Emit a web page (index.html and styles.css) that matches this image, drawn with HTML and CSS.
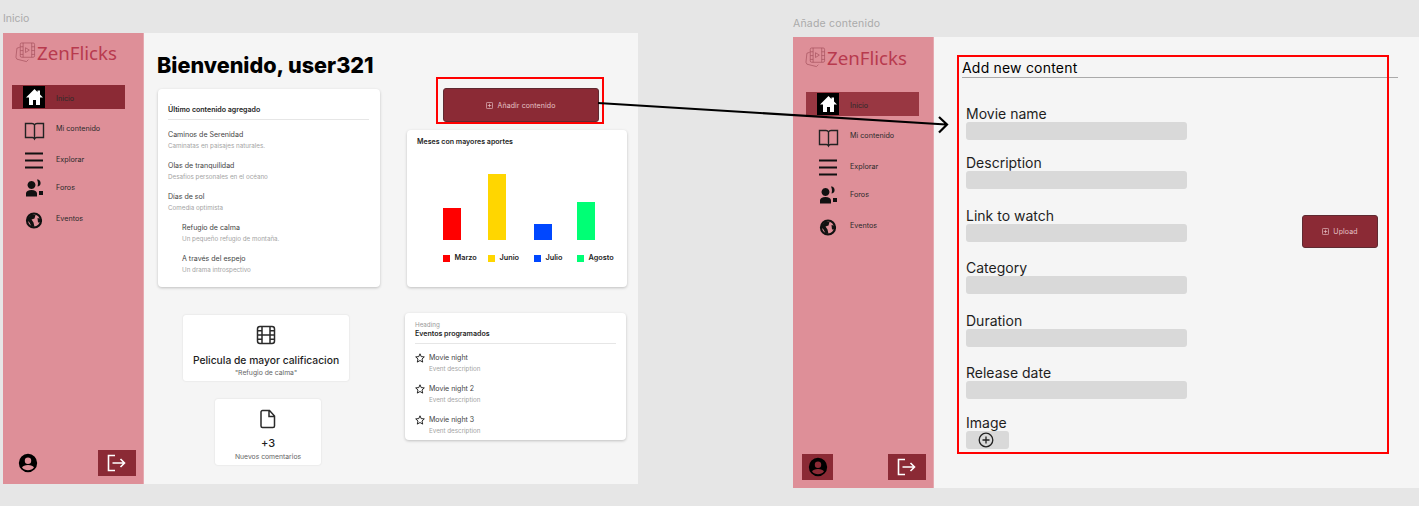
FILE: index.html
```html
<!DOCTYPE html>
<html lang="es">
<head>
<meta charset="utf-8">
<title>ZenFlicks</title>
<link rel="stylesheet" href="styles.css">
</head>
<body>
<div class="canvas">
  <div class="frame-label label-home">Inicio</div>
  <section class="frame frame-home">
    <aside class="sidebar">
      <div class="logo">
        <svg class="logo-icon" viewBox="0 0 22 22"><path d="M5 5.500 2 6.500 1 16l1 2 10 2.500 2-2"/><rect x="5.500" y="1" width="15" height="15" rx="1.500"/><path d="M8.500 1v15M17.500 1v15M5.500 5h3M5.500 9h3M5.500 13h3M17.500 5h3M17.500 9h3M17.500 13h3M11 6l4 2.500-4 2.500z"/></svg>
        <span>ZenFlicks</span>
      </div>
      <nav class="nav">
        <a class="nav-item active"><span class="nav-icon home-box"><svg viewBox="0 0 22 22" class="icon-22"><path fill="#fff" d="M11.500 3 3 11.500h3V19h4v-5h3v5h4v-7.500h3L17 8.500V4.500h-2.500v1.500z"/></svg></span><span class="nav-text">Inicio</span></a>
        <a class="nav-item"><span class="nav-icon"><svg viewBox="0 0 22 22" class="icon-22"><path fill="none" stroke="#222" stroke-width="1.400" d="M2.500 6.500H9c1 0 2 .5 2.500 1.500.5-1 1.500-1.500 2.500-1.500h6.500v14h-7c-1 0-1.500.5-2 1.500-.5-1-1-1.500-2-1.500h-7zM11.500 8v14"/></svg></span><span class="nav-text">Mi contenido</span></a>
        <a class="nav-item"><span class="nav-icon"><svg viewBox="0 0 22 22" class="icon-22"><path stroke="#111" stroke-width="2.200" d="M2 5.500h18M2 12.500h18M2 19.500h18"/></svg></span><span class="nav-text">Explorar</span></a>
        <a class="nav-item"><span class="nav-icon"><svg viewBox="0 0 22 22" class="icon-22"><path fill="#111" d="M8.500 5a4 4 0 1 1-.01 0zM14 3.500c2.500 0 4 2 3.500 4.500-.3 1.500-1.500 2.500-3 2.500.8-2 .6-5-.5-7zM3 20.500v-3c0-2 2.200-3.500 5.500-3.500s5.500 1.500 5.500 3.500v3zM16 15h4v4h-4z"/></svg></span><span class="nav-text">Foros</span></a>
        <a class="nav-item"><span class="nav-icon"><svg viewBox="0 0 22 22" class="icon-22"><circle cx="11" cy="13.500" r="7" fill="none" stroke="#111" stroke-width="2.200"/><path fill="#111" d="M5 11l3.500-4 4 1-1 3.500-3 1 2 3 1 4.500-3-.5-2-4-2-2zM14.500 11l4 1 .5 3-4 .5z"/></svg></span><span class="nav-text">Eventos</span></a>
      </nav>
      <div class="side-footer">
        <span class="avatar-btn"><svg viewBox="0 0 24 24" class="icon-avatar"><path fill="#000" d="M12 2a10 10 0 1 0 0 20 10 10 0 0 0 0-20zm0 4a3.500 3.500 0 1 1 0 7 3.500 3.500 0 0 1 0-7zm0 14c-2.700 0-5-1.200-6.500-3 .6-1.700 3.300-2.700 6.500-2.700s5.900 1 6.500 2.700c-1.500 1.800-3.800 3-6.500 3z"/></svg></span>
        <span class="logout-btn"><svg viewBox="0 0 20 18" class="icon-logout"><path fill="none" stroke="#fff" stroke-width="1.600" d="M8 1.500H1.500v15H8M5.500 9h12M13.500 5l4 4-4 4"/></svg></span>
      </div>
    </aside>
    <main class="home-main">
      <h1 class="welcome">Bienvenido, user321</h1>
      <div class="home-columns">
        <div class="col-left">
          <div class="card latest">
            <div class="card-title ruled">Último contenido agregado</div>
            <div class="list">
              <div class="entry"><div class="entry-title">Caminos de Serenidad</div><div class="entry-sub">Caminatas en paisajes naturales.</div></div>
              <div class="entry"><div class="entry-title">Olas de tranquilidad</div><div class="entry-sub">Desafíos personales en el océano</div></div>
              <div class="entry"><div class="entry-title">Días de sol</div><div class="entry-sub">Comedia optimista</div></div>
              <div class="entry indented"><div class="entry-title">Refugio de calma</div><div class="entry-sub">Un pequeño refugio de montaña.</div></div>
              <div class="entry indented"><div class="entry-title">A través del espejo</div><div class="entry-sub">Un drama introspectivo</div></div>
            </div>
          </div>
          <div class="card stat stat-movie">
            <svg viewBox="0 0 20 20" class="stat-icon"><rect x="1.500" y="1.500" width="17" height="17" rx="2.500"/><path d="M6 1.500v17M14 1.500v17M1.500 10h17M1.500 5.800H6M1.500 14.200H6M14 5.800h4.500M14 14.200h4.500"/></svg>
            <div class="stat-value">Pelicula de mayor calificacion</div>
            <div class="stat-caption">"Refugio de calma"</div>
          </div>
          <div class="card stat stat-comments">
            <svg viewBox="0 0 20 20" class="stat-icon"><path d="M4.500 1.500h7l5 5.500v10a1.500 1.500 0 0 1-1.500 1.500H4.500A1.500 1.500 0 0 1 3 17V3a1.500 1.500 0 0 1 1.500-1.500zM11 1.500v6h5.500"/></svg>
            <div class="stat-value">+3</div>
            <div class="stat-caption">Nuevos comentarios</div>
          </div>
        </div>
        <div class="col-right">
          <button class="action-btn add-btn"><svg viewBox="0 0 8 8" class="btn-icon"><rect x=".5" y=".5" width="7" height="7" rx="1"/><path d="M2 4h4M4 2v4"/></svg>Añadir contenido</button>
          <div class="card chart">
            <div class="card-title">Meses con mayores aportes</div>
            <div class="plot">
              <div class="bar-col"><div class="bar c-red" style="height:32px"></div></div>
              <div class="bar-col"><div class="bar c-yellow" style="height:66px"></div></div>
              <div class="bar-col"><div class="bar c-blue" style="height:16px"></div></div>
              <div class="bar-col"><div class="bar c-green" style="height:38px"></div></div>
            </div>
            <div class="legend">
              <div class="legend-item"><i class="swatch c-red"></i>Marzo</div>
              <div class="legend-item"><i class="swatch c-yellow"></i>Junio</div>
              <div class="legend-item"><i class="swatch c-blue"></i>Julio</div>
              <div class="legend-item"><i class="swatch c-green"></i>Agosto</div>
            </div>
          </div>
          <div class="card events">
            <div class="eyebrow">Heading</div>
            <div class="card-title ruled">Eventos programados</div>
            <div class="list">
              <div class="event"><svg viewBox="0 0 10 10" class="star"><path d="M5 .8 6.200 3.600 9.300 3.900 7 6 7.700 9.100 5 7.500 2.300 9.100 3 6 .7 3.900 3.800 3.600z"/></svg><div><div class="entry-title">Movie night</div><div class="entry-sub">Event description</div></div></div>
              <div class="event"><svg viewBox="0 0 10 10" class="star"><path d="M5 .8 6.200 3.600 9.300 3.900 7 6 7.700 9.100 5 7.500 2.300 9.100 3 6 .7 3.900 3.800 3.600z"/></svg><div><div class="entry-title">Movie night 2</div><div class="entry-sub">Event description</div></div></div>
              <div class="event"><svg viewBox="0 0 10 10" class="star"><path d="M5 .8 6.200 3.600 9.300 3.900 7 6 7.700 9.100 5 7.500 2.300 9.100 3 6 .7 3.900 3.800 3.600z"/></svg><div><div class="entry-title">Movie night 3</div><div class="entry-sub">Event description</div></div></div>
            </div>
          </div>
        </div>
      </div>
    </main>
  </section>

  <div class="frame-label label-add">Añade contenido</div>
  <section class="frame frame-add">
    <aside class="sidebar sidebar-alt">
      <div class="logo">
        <svg class="logo-icon" viewBox="0 0 22 22"><path d="M5 5.500 2 6.500 1 16l1 2 10 2.500 2-2"/><rect x="5.500" y="1" width="15" height="15" rx="1.500"/><path d="M8.500 1v15M17.500 1v15M5.500 5h3M5.500 9h3M5.500 13h3M17.500 5h3M17.500 9h3M17.500 13h3M11 6l4 2.500-4 2.500z"/></svg>
        <span>ZenFlicks</span>
      </div>
      <nav class="nav">
        <a class="nav-item active"><span class="nav-icon home-box"><svg viewBox="0 0 22 22" class="icon-22"><path fill="#fff" d="M11.500 3 3 11.500h3V19h4v-5h3v5h4v-7.500h3L17 8.500V4.500h-2.500v1.500z"/></svg></span><span class="nav-text">Inicio</span></a>
        <a class="nav-item"><span class="nav-icon"><svg viewBox="0 0 22 22" class="icon-22"><path fill="none" stroke="#222" stroke-width="1.400" d="M2.500 6.500H9c1 0 2 .5 2.500 1.500.5-1 1.500-1.500 2.500-1.500h6.500v14h-7c-1 0-1.500.5-2 1.500-.5-1-1-1.500-2-1.500h-7zM11.500 8v14"/></svg></span><span class="nav-text">Mi contenido</span></a>
        <a class="nav-item"><span class="nav-icon"><svg viewBox="0 0 22 22" class="icon-22"><path stroke="#111" stroke-width="2.200" d="M2 5.500h18M2 12.500h18M2 19.500h18"/></svg></span><span class="nav-text">Explorar</span></a>
        <a class="nav-item"><span class="nav-icon"><svg viewBox="0 0 22 22" class="icon-22"><path fill="#111" d="M8.500 5a4 4 0 1 1-.01 0zM14 3.500c2.500 0 4 2 3.500 4.500-.3 1.500-1.500 2.500-3 2.500.8-2 .6-5-.5-7zM3 20.500v-3c0-2 2.200-3.500 5.500-3.500s5.500 1.500 5.500 3.500v3zM16 15h4v4h-4z"/></svg></span><span class="nav-text">Foros</span></a>
        <a class="nav-item"><span class="nav-icon"><svg viewBox="0 0 22 22" class="icon-22"><circle cx="11" cy="13.500" r="7" fill="none" stroke="#111" stroke-width="2.200"/><path fill="#111" d="M5 11l3.500-4 4 1-1 3.500-3 1 2 3 1 4.500-3-.5-2-4-2-2zM14.500 11l4 1 .5 3-4 .5z"/></svg></span><span class="nav-text">Eventos</span></a>
      </nav>
      <div class="side-footer">
        <span class="avatar-btn"><svg viewBox="0 0 24 24" class="icon-avatar"><path fill="#000" d="M12 2a10 10 0 1 0 0 20 10 10 0 0 0 0-20zm0 4a3.500 3.500 0 1 1 0 7 3.500 3.500 0 0 1 0-7zm0 14c-2.700 0-5-1.200-6.500-3 .6-1.700 3.300-2.700 6.500-2.700s5.900 1 6.500 2.700c-1.500 1.800-3.800 3-6.500 3z"/></svg></span>
        <span class="logout-btn"><svg viewBox="0 0 20 18" class="icon-logout"><path fill="none" stroke="#fff" stroke-width="1.600" d="M8 1.500H1.500v15H8M5.500 9h12M13.500 5l4 4-4 4"/></svg></span>
      </div>
    </aside>
    <main class="add-main">
      <h2 class="form-title">Add new content</h2>
      <div class="form-body">
        <div class="fields">
          <div class="field"><div class="field-label">Movie name</div><div class="input"></div></div>
          <div class="field"><div class="field-label">Description</div><div class="input"></div></div>
          <div class="field"><div class="field-label">Link to watch</div><div class="input"></div></div>
          <div class="field"><div class="field-label">Category</div><div class="input"></div></div>
          <div class="field"><div class="field-label">Duration</div><div class="input"></div></div>
          <div class="field"><div class="field-label">Release date</div><div class="input"></div></div>
          <div class="field"><div class="field-label">Image</div><div class="image-btn"><svg viewBox="0 0 16 16" class="icon-plus"><circle cx="8" cy="8" r="6.800"/><path d="M4.500 8h7M8 4.500v7"/></svg></div></div>
        </div>
        <button class="action-btn upload-btn"><svg viewBox="0 0 8 8" class="btn-icon"><rect x=".5" y=".5" width="7" height="7" rx="1"/><path d="M2 4h4M4 2v4"/></svg>Upload</button>
      </div>
    </main>
  </section>

  <div class="redbox redbox-btn"></div>
  <div class="redbox redbox-form"></div>
  <svg class="connector" viewBox="0 0 1419 506"><path d="M598 103 946 124.500M939 117l8 7.500-8 8"/></svg>
</div>
</body>
</html>
```
FILE: styles.css
```css
* { box-sizing: border-box; }
html, body { margin: 0; padding: 0; }
body { width: 1419px; height: 506px; overflow: hidden; background: #e6e6e6; font-family: "Inter", "Liberation Sans", sans-serif; color: #1e1e1e; }
.canvas { position: relative; width: 1419px; height: 506px; overflow: hidden; }

.frame-label { position: absolute; font-size: 10.500px; line-height: 14px; color: #aaa; }
.label-home { left: 3px; top: 12px; }
.label-add { left: 793px; top: 17px; letter-spacing: .2px; }

.frame { position: absolute; display: flex; height: 451px; background: #f5f5f5; }
.frame-home { left: 3px; top: 33px; width: 635px; }
.frame-add { left: 793px; top: 37px; width: 626px; }

.sidebar { flex: none; width: 141px; height: 100%; background: #de8f98; display: flex; flex-direction: column; border-right: 1px solid #e5a9b0; }
.logo { display: flex; align-items: center; height: 24px; margin: 7px 0 0 12px; color: #b83a4e; font-family: "Noto Sans", sans-serif; font-size: 18.700px; }
.logo-icon { width: 21px; height: 21px; margin-right: 1px; fill: none; stroke: #a3505c; stroke-width: .7; }
.nav { margin: 21px 0 0 9px; display: grid; grid-template-rows: 31px 31px 28px 31px 24px; width: 113px; }
.nav-item { display: flex; align-items: center; height: 24px; padding-left: 11px; font-size: 7.200px; color: #2a2a2a; }
.nav-item.active { background: #8b2a35; }
.nav-item.active .nav-text { padding-top: 2px; }
.nav-icon { flex: none; width: 22px; height: 22px; margin-right: 11px; display: block; }
.home-box { background: #000; }
.icon-22 { display: block; width: 22px; height: 22px; overflow: visible; }
.side-footer { margin-top: auto; margin-bottom: 8px; padding-left: 9px; display: flex; align-items: center; height: 26px; }
.avatar-btn { width: 31px; height: 26px; display: flex; align-items: center; justify-content: center; }
.icon-avatar { width: 22px; height: 22px; }
.logout-btn { margin-left: auto; margin-right: 7px; width: 38px; height: 26px; background: #8b2a35; display: flex; align-items: center; justify-content: center; }
.icon-logout { width: 20px; height: 18px; }

.sidebar-alt .logo { margin-top: 8px; }
.sidebar-alt .nav { margin: 23px 0 0 13px; }
.sidebar-alt .nav-item.active { background: #993742; }
.sidebar-alt .avatar-btn { background: #8b2a35; }

.home-main { flex: 1; min-width: 0; padding-left: 14px; }
.welcome { margin: 0 0 0 -1px; height: 56px; padding-top: 18px; font-family: "Inter", sans-serif; font-size: 21.600px; line-height: 28px; font-weight: 800; color: #000; white-space: nowrap; }
.home-columns { display: flex; gap: 25px; align-items: flex-start; }
.col-left { width: 222px; }
.col-right { width: 222px; }

.card { background: #fff; border-radius: 4px; box-shadow: 0 1px 3px rgba(0,0,0,.22); }
.card-title { font-size: 7.050px; line-height: 10px; font-weight: 600; color: #1e1e1e; }
.ruled { padding-bottom: 4px; border-bottom: 1px solid #e6e6e6; }
.list { display: grid; grid-auto-rows: 31px; margin-top: 9px; }
.entry-title { font-size: 7.050px; line-height: 10px; color: #444; }
.entry-sub { margin-top: 1px; font-size: 6.250px; line-height: 10px; color: #a3a3a3; }
.latest { height: 198px; padding: 16px 11px 0 10px; }
.latest .list { margin-top: 10px; }
.indented { padding-left: 14px; }

.stat { display: flex; flex-direction: column; align-items: center; height: 66px; box-shadow: 0 0 2px rgba(0,0,0,.13); border-radius: 3px; }
.stat-icon { width: 20px; height: 20px; margin-top: 10px; fill: none; stroke: #2a2a2a; stroke-width: 1.500; }
.stat-value { margin-top: 8px; font-size: 10.300px; line-height: 14px; font-weight: 500; color: #1e1e1e; white-space: nowrap; }
.stat-caption { margin-top: 1px; font-size: 6.800px; line-height: 10px; color: #666; white-space: nowrap; }
.stat-movie { width: 166px; margin: 28px 0 0 25px; }
.stat-comments { width: 106px; margin: 18px 0 0 57px; }
.stat-comments .stat-value { margin-top: 7px; font-size: 11px; }
.stat-comments .stat-caption { margin-top: 2px; }

.action-btn { display: flex; align-items: center; justify-content: center; padding: 0; background: #8b2a35; border: 1px solid #5f2a31; border-radius: 3px; color: #e6c3c7; font-family: inherit; font-size: 7px; letter-spacing: .1px; }
.btn-icon { width: 7px; height: 7px; margin-right: 4px; fill: none; stroke: #e6c3c7; stroke-width: .8; }
.add-btn { width: 156px; height: 34px; margin: -1px 0 0 38px; }
.chart { width: 220px; height: 157px; margin: 8px 0 0 2px; padding: 7px 0 0 10px; }
.plot { display: grid; grid-template-columns: 45px 46px 43px 40px; align-items: end; height: 66px; margin: 27px 0 0 26px; }
.bar { width: 18px; }
.c-red { background: #ff0000; }
.c-yellow { background: #ffd600; }
.c-blue { background: #0047ff; }
.c-green { background: #00ff75; }
.legend { display: grid; grid-template-columns: 45px 46px 43px 50px; margin: 13px 0 0 26px; }
.legend-item { display: flex; align-items: center; font-size: 7.300px; line-height: 10px; font-weight: 600; color: #1e1e1e; }
.swatch { width: 7px; height: 7px; margin-right: 4.500px; }

.events { width: 221px; height: 127px; padding: 8px 10px 0 10px; margin-top: 26px; }
.eyebrow { font-size: 6.250px; line-height: 8px; color: #999; }
.event { display: flex; }
.star { flex: none; width: 10px; height: 10px; margin-right: 4px; fill: none; stroke: #111; stroke-width: .9; }

.add-main { flex: 1; min-width: 0; padding: 23px 0 0 28px; }
.form-title { margin: 0; width: 436px; height: 18px; border-bottom: 1px solid #aaa; font-size: 14px; line-height: 16px; font-weight: 400; color: #000; letter-spacing: .2px; }
.form-body { display: flex; align-items: flex-start; margin: 28px 0 0 4px; }
.fields { display: grid; grid-template-rows: 49px 53px 52px 53px 52px 50px auto; width: 221px; }
.field-label { font-size: 14px; line-height: 16px; color: #1e1e1e; white-space: nowrap; }
.input { height: 18px; border-radius: 3px; background: #d9d9d9; }
.image-btn { width: 43px; height: 18px; padding-right: 3px; border-radius: 3px; background: #d9d9d9; display: flex; align-items: center; justify-content: center; }
.icon-plus { width: 16px; height: 16px; fill: none; stroke: #222; stroke-width: 1.300; }
.upload-btn { width: 76px; height: 33px; margin: 109px 0 0 115px; }

.redbox { position: absolute; border: 2px solid #ff0000; }
.redbox-btn { left: 436px; top: 77px; width: 168px; height: 47px; }
.redbox-form { left: 957px; top: 55px; width: 432px; height: 399px; }
.connector { position: absolute; left: 0; top: 0; width: 1419px; height: 506px; fill: none; stroke: #000; stroke-width: 2.200; pointer-events: none; }
```
